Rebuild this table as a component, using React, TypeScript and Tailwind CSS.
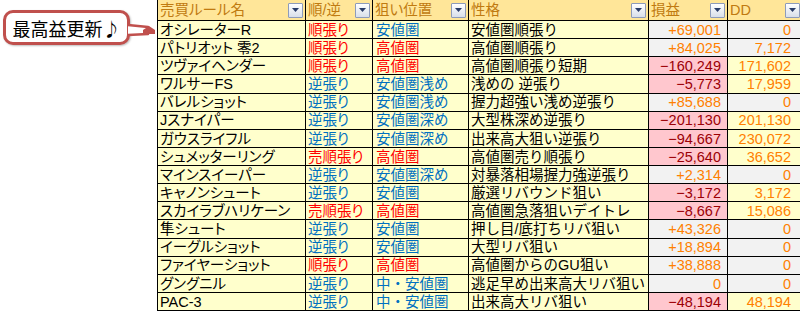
import React from "react";

type Row = [string, string, string, string, string, string];

const rows: Row[] = [
  ["オシレーターR", "順張り", "安値圏", "安値圏順張り", "+69,001", "0"],
  ["パトリオット 零2", "順張り", "高値圏", "高値圏順張り", "+84,025", "7,172"],
  ["ツヴァイヘンダー", "順張り", "高値圏", "高値圏順張り短期", "−160,249", "171,602"],
  ["ワルサーFS", "逆張り", "安値圏浅め", "浅めの 逆張り", "−5,773", "17,959"],
  ["バレルショット", "逆張り", "安値圏浅め", "握力超強い浅め逆張り", "+85,688", "0"],
  ["Jスナイパー", "逆張り", "安値圏深め", "大型株深め逆張り", "−201,130", "201,130"],
  ["ガウスライフル", "逆張り", "安値圏深め", "出来高大狙い逆張り", "−94,667", "230,072"],
  ["シュメッターリング", "売順張り", "高値圏", "高値圏売り順張り", "−25,640", "36,652"],
  ["マインスイーパー", "逆張り", "安値圏深め", "対暴落相場握力強逆張り", "+2,314", "0"],
  ["キャノンシュート", "逆張り", "安値圏", "厳選リバウンド狙い", "−3,172", "3,172"],
  ["スカイラブハリケーン", "売順張り", "高値圏", "高値圏急落狙いデイトレ", "−8,667", "15,086"],
  ["隼シュート", "逆張り", "安値圏", "押し目/底打ちリバ狙い", "+43,326", "0"],
  ["イーグルショット", "逆張り", "安値圏", "大型リバ狙い", "+18,894", "0"],
  ["ファイヤーショット", "順張り", "高値圏", "高値圏からのGU狙い", "+38,888", "0"],
  ["グングニル", "逆張り", "中・安値圏", "逃足早め出来高大リバ狙い", "0", "0"],
  ["PAC-3", "逆張り", "中・安値圏", "出来高大リバ狙い", "−48,194", "48,194"],
];

const headers = ["売買ルール名", "順/逆", "狙い位置", "性格", "損益", "DD"];

function DropBtn() {
  return (
    <div className="ml-auto mr-[2px] flex h-[15px] w-[15px] shrink-0 items-center justify-center rounded-[1px] border border-[#8d9bbb] bg-gradient-to-b from-[#ffffff] to-[#d8dfea]">
      <svg width="7" height="4" viewBox="0 0 7 4">
        <path d="M0 0 H7 L3.5 4 Z" fill="#2a3d6a" />
      </svg>
    </div>
  );
}

function Callout() {
  return (
    <div className="relative h-full w-[157px] shrink-0">
      <div className="ml-[3px] mt-[10px] flex h-[35px] w-[127px] items-center justify-center rounded-[10px] border-[3px] border-[#c0504d] bg-white shadow-[1px_1px_2px_rgba(0,0,0,0.25)]">
        <span className="text-[18px] leading-none text-black [font-family:'Noto_Sans_CJK_JP',sans-serif]">
          最高益更新♪
        </span>
      </div>
      <svg
        className="absolute left-[126px] top-[20px]"
        width="31"
        height="20"
        viewBox="0 0 31 20"
      >
        <path d="M2 5 L22 7 L22 14 L2 15" fill="white" stroke="#c0504d" strokeWidth="2.5" strokeLinejoin="round" />
        <path d="M17 14 L17 10 L23 6 L29 10 L29 14 Z" fill="#c0504d" />
      </svg>
    </div>
  );
}

export default function App() {
  return (
    <div className="flex h-[311px] w-[800px] overflow-hidden bg-white [font-family:'Liberation_Sans','Noto_Sans_CJK_JP',sans-serif]">
      <Callout />
      <div className="flex shrink-0 flex-col border-l border-black">
        <div className="grid h-[21px] grid-cols-[148px_67px_96px_180px_79px_75px] border-b border-black bg-[#ffe699]">
          {headers.map((h, i) => (
            <div
              key={i}
              className="flex items-center border-r border-black pl-[2px] text-[14.5px] leading-none text-[#c07a10] [font-feature-settings:'palt']"
            >
              <span>{h}</span>
              <DropBtn />
            </div>
          ))}
        </div>
        {rows.map((r, idx) => {
          const neg = r[4].startsWith("−");
          const c2 = r[1] === "逆張り" ? "text-[#0070c0]" : "text-[#ff0000]";
          const c3 = r[2].startsWith("高") ? "text-[#ff0000]" : "text-[#0070c0]";
          return (
            <div
              key={idx}
              className="grid h-[18.125px] grid-cols-[148px_67px_96px_180px_79px_75px] border-b border-black text-[14.5px] leading-none"
            >
              <div className="flex items-center border-r border-black bg-[#ffffcc] pl-[2px] pt-[1px] text-black [font-feature-settings:'palt']">
                {r[0]}
              </div>
              <div className={`flex items-center border-r border-black bg-[#ffffcc] pl-[2px] pt-[1px] [font-feature-settings:'palt'] ${c2}`}>
                {r[1]}
              </div>
              <div className={`flex items-center border-r border-black bg-[#ffffcc] pl-[3px] pt-[1px] ${c3}`}>
                {r[2]}
              </div>
              <div className="flex items-center whitespace-pre border-r border-black bg-[#ffffcc] pl-[2px] pt-[1px] text-black">
                {r[3]}
              </div>
              <div
                className={`flex items-center justify-end border-r border-black pr-[6px] pt-[1px] ${
                  neg ? "bg-[#ffc7ce] text-[#9c0006]" : "bg-[#f2f2f2] text-[#ff8000]"
                }`}
              >
                {r[4]}
              </div>
              <div
                className={`flex items-center justify-end border-r border-black pr-[11px] pt-[1px] text-[#ff8000] ${
                  neg ? "bg-[#ffffcc]" : "bg-[#f2f2f2]"
                }`}
              >
                {r[5]}
              </div>
            </div>
          );
        })}
      </div>
    </div>
  );
}
